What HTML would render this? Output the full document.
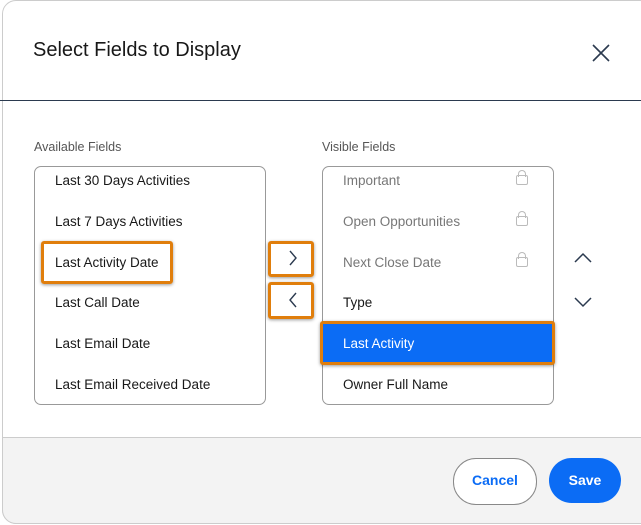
<!DOCTYPE html>
<html><head><style>
body{margin:0;width:641px;height:525px;background:#fff;font-family:"Liberation Sans",sans-serif;position:relative;overflow:hidden}
.modal{position:absolute;left:2px;top:0;width:650px;height:522px;border:1px solid #ccc;border-radius:14px;background:#fff;overflow:hidden}
.abs{position:absolute}
h1{position:absolute;left:33px;top:39px;margin:0;font-size:20px;font-weight:normal;color:#181818}
.hd{left:0;top:100px;width:641px;height:1px;background:#2b3a4f}
.lbl{font-size:12.5px;color:#555}
.box{border:1px solid #999;border-radius:7px;height:237px;width:230px;top:166px}
.it{position:absolute;font-size:13.5px;color:#181818;left:20px}
.g{color:#777}
.lock{position:absolute;right:25px;width:10px;height:8px;border:1px solid #bbb;border-radius:2px}
.lock:before{content:"";position:absolute;left:1px;top:-6px;width:6px;height:6px;border:1px solid #bbb;border-bottom:none;border-radius:4px 4px 0 0}
.ob{border:3px solid #e07e0c;border-radius:3px;box-shadow:0 1px 3px rgba(0,0,0,.4)}
.foot{left:2px;top:437px;width:650px;height:85px;background:#f3f3f3;border-top:1px solid #ccc;border-left:1px solid #ccc;border-bottom:1px solid #ccc;border-radius:0 0 0 14px}
.btn{border-radius:23px;font-size:14px;font-weight:bold;text-align:center;line-height:45px;height:45px;top:458px}
</style></head><body>
<div class="modal"></div>
<h1>Select Fields to Display</h1>
<svg class="abs" style="left:592px;top:44px" width="18" height="18"><path d="M1 1L17 17M17 1L1 17" stroke="#2b3a4f" stroke-width="1.6"/></svg>
<div class="abs hd"></div>
<div class="abs lbl" style="left:34px;top:140px">Available Fields</div>
<div class="abs lbl" style="left:322px;top:140px">Visible Fields</div>
<div class="abs box" style="left:34px">
<div class="it" style="top:6px">Last 30 Days Activities</div>
<div class="it" style="top:47px">Last 7 Days Activities</div>
<div class="it" style="top:88px">Last Activity Date</div>
<div class="it" style="top:128px">Last Call Date</div>
<div class="it" style="top:169px">Last Email Date</div>
<div class="it" style="top:210px">Last Email Received Date</div>
</div>
<div class="abs ob" style="left:41px;top:241px;width:126px;height:37px"></div>
<div class="abs box" style="left:322px">
<div class="it g" style="top:6px">Important</div><div class="lock" style="top:8px"></div>
<div class="it g" style="top:47px">Open Opportunities</div><div class="lock" style="top:49px"></div>
<div class="it g" style="top:88px">Next Close Date</div><div class="lock" style="top:90px"></div>
<div class="it" style="top:128px">Type</div>
<div class="it" style="top:210px">Owner Full Name</div>
</div>
<div class="abs ob" style="left:320px;top:321px;width:229px;height:38px;background:#0b6cf5"></div>
<div class="abs" style="left:343px;top:336px;font-size:13.5px;color:#fff">Last Activity</div>
<div class="abs ob" style="left:268px;top:241px;width:40px;height:30px"></div>
<div class="abs ob" style="left:268px;top:282px;width:40px;height:31px"></div>
<svg class="abs" style="left:288px;top:250px" width="10" height="16"><path d="M2 1L8 8L2 15" fill="none" stroke="#2b3a4f" stroke-width="1.4"/></svg>
<svg class="abs" style="left:288px;top:292px" width="10" height="16"><path d="M8 1L2 8L8 15" fill="none" stroke="#2b3a4f" stroke-width="1.4"/></svg>
<svg class="abs" style="left:574px;top:252px" width="18" height="12"><path d="M1 10L9 2L17 10" fill="none" stroke="#2b3a4f" stroke-width="1.5"/></svg>
<svg class="abs" style="left:574px;top:296px" width="18" height="12"><path d="M1 2L9 10L17 2" fill="none" stroke="#2b3a4f" stroke-width="1.5"/></svg>
<div class="abs foot"></div>
<div class="abs btn" style="left:453px;width:82px;border:1px solid #888;background:#fff;color:#0b6cf5;line-height:43px">Cancel</div>
<div class="abs btn" style="left:549px;width:72px;background:#0b6cf5;color:#fff">Save</div>
</body></html>
